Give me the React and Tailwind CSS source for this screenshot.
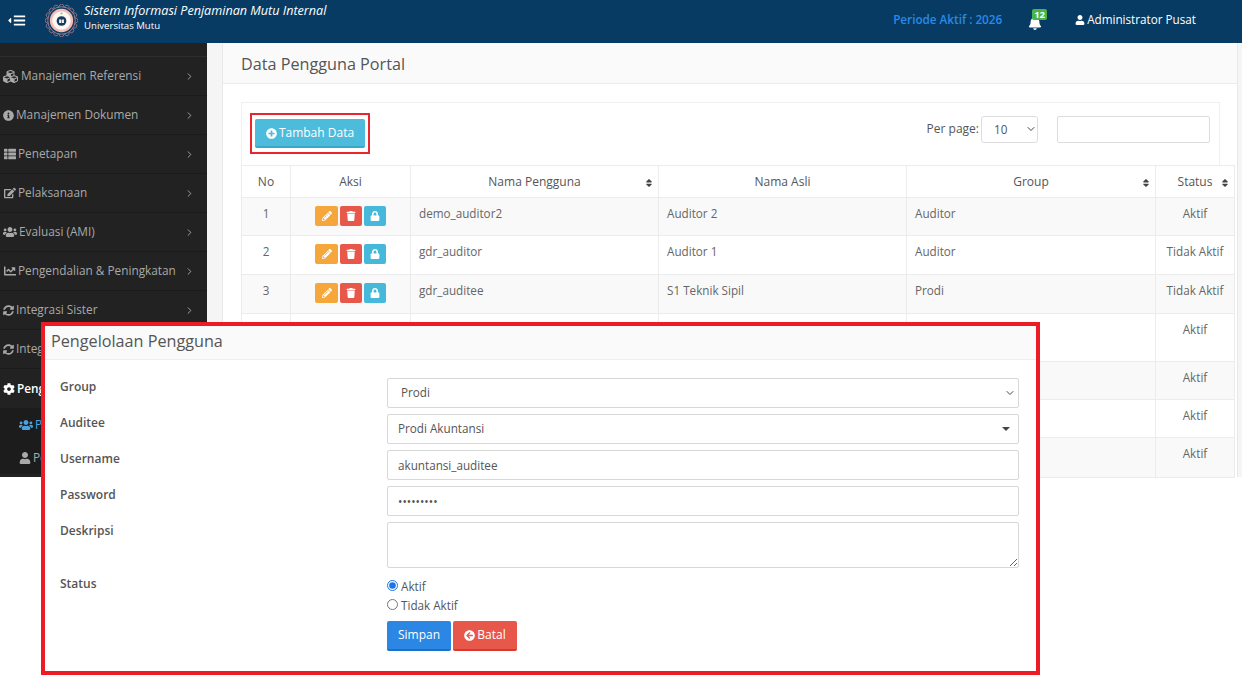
import React from 'react';
import { ChevronDown, ChevronRight } from 'lucide-react';
import {
  FaArrowCircleLeft, FaBars, FaBell, FaCaretLeft, FaChartLine, FaCog, FaCubes, FaEdit, FaInfoCircle,
  FaLock, FaPencilAlt, FaPlusCircle, FaSort, FaSyncAlt, FaThList, FaTrash, FaUser, FaUsers,
} from 'react-icons/fa';

const menu = [
  { label: 'Manajemen Referensi', icon: FaCubes, iconClass: 'ml-[3px] mr-[3px] h-[15px] w-[15px]' },
  { label: 'Manajemen Dokumen', icon: FaInfoCircle, iconClass: 'ml-[3px] mr-[2px] h-[11px] w-[11px]' },
  { label: 'Penetapan', icon: FaThList, iconClass: 'ml-[4px] mr-[2px] h-[12px] w-[12px]' },
  { label: 'Pelaksanaan', icon: FaEdit, iconClass: 'ml-[4px] mr-[2px] h-[12px] w-[12px]' },
  { label: 'Evaluasi (AMI)', icon: FaUsers, iconClass: 'ml-[3px] mr-[2px] h-[14px] w-[14px]' },
  { label: 'Pengendalian & Peningkatan', icon: FaChartLine, iconClass: 'ml-[4px] mr-[2px] h-[12px] w-[12px]' },
  { label: 'Integrasi Sister', icon: FaSyncAlt, iconClass: 'ml-[3px] mr-[2px] h-[11px] w-[11px]' },
  { label: 'Integrasi Feeder', icon: FaSyncAlt, iconClass: 'ml-[3px] mr-[2px] h-[11px] w-[11px]' },
];

const rows = [
  { no: 1, user: 'demo_auditor2', name: 'Auditor 2', group: 'Auditor', status: 'Aktif', h: 'h-[38px]' },
  { no: 2, user: 'gdr_auditor', name: 'Auditor 1', group: 'Auditor', status: 'Tidak Aktif', h: 'h-[39px]' },
  { no: 3, user: 'gdr_auditee', name: 'S1 Teknik Sipil', group: 'Prodi', status: 'Tidak Aktif', h: 'h-[39px]' },
  { no: 4, user: '', name: '', group: '', status: 'Aktif', h: 'h-[48px]' },
  { no: 5, user: '', name: '', group: '', status: 'Aktif', h: 'h-[38px]' },
  { no: 6, user: '', name: '', group: '', status: 'Aktif', h: 'h-[38px]' },
  { no: 7, user: '', name: '', group: '', status: 'Aktif', h: 'h-[40px]' },
];

function Logo() {
  const bumps = Array.from({ length: 16 }, (_, i) => (i * 360) / 16);
  return (
    <svg viewBox="0 0 34 34" className="h-[33px] w-[33px] shrink-0">
      {bumps.map((a) => (
        <circle key={a} cx="17" cy="2.6" r="2.4" fill="#0b3a60" stroke="#b58a9a" strokeWidth="0.7" transform={`rotate(${a} 17 17)`} />
      ))}
      <circle cx="17" cy="17" r="14.2" fill="#123c60" stroke="#b58a9a" strokeWidth="0.8" />
      <circle cx="17" cy="17" r="12" fill="#f0bdb8" />
      <circle cx="17" cy="17" r="9.6" fill="#fbf7f3" />
      <circle cx="17" cy="17.5" r="5" fill="#173a5e" />
      <path d="M14.5 16h2.2v3.6h-2.2zM17.3 16h2.2v3.6h-2.2z" fill="#e8eef2" />
      <circle cx="17" cy="9.8" r="1" fill="#d9a43c" />
    </svg>
  );
}

function Header() {
  return (
    <div className="flex h-[43px] shrink-0 items-center bg-[#073b63] pb-[3px] text-white">
      <div className="ml-[7px] flex w-[38px] items-center">
        <FaCaretLeft className="h-[9px] w-[5px]" />
        <FaBars className="ml-[1px] h-[13px] w-[13px]" />
      </div>
      <Logo />
      <div className="mb-[6px] ml-[6px] flex flex-col">
        <span className="text-[12.6px] leading-[18px] italic">Sistem Informasi Penjaminan Mutu Internal</span>
        <span className="text-[9.6px] leading-[12px] font-medium">Universitas Mutu</span>
      </div>
      <span className="ml-auto text-[11.7px] font-semibold text-[#2a8ae6]">Periode Aktif : 2026</span>
      <div className="relative ml-[26px] h-[20px] w-[18px]">
        <FaBell className="absolute top-[6px] left-0 h-[14px] w-[14px]" />
        <span className="absolute -top-[1px] left-[4px] rounded-[2px] bg-[#45b649] px-[2px] text-[9.5px] leading-[11px] font-bold">12</span>
      </div>
      <div className="mr-[46px] ml-[29px] flex items-center gap-[2px] text-[11.7px] font-medium">
        <FaUser className="h-[10px] w-[10px]" />
        <span>Administrator Pusat</span>
      </div>
    </div>
  );
}

function Sidebar() {
  return (
    <div className="flex w-[207px] shrink-0 flex-col bg-[#222222] pt-[13px] text-[11.8px] text-[#a9a9a9]">
      <div className="border-t border-[#2e2e2e]" />
      {menu.map((item) => (
        <div key={item.label} className="flex h-[39px] items-center border-b border-[#1b1b1b] pr-[12px]">
          <item.icon className={`shrink-0 ${item.iconClass}`} />
          <span className="whitespace-nowrap">{item.label}</span>
          <ChevronRight className="ml-auto h-[11px] w-[11px] shrink-0" />
        </div>
      ))}
      <div className="flex h-[39px] items-center gap-[2px] pl-[3px] font-semibold text-white">
        <FaCog className="h-[12px] w-[12px]" />
        <span>Pengaturan</span>
      </div>
      <div className="flex h-[33px] items-center gap-[2px] bg-[#1c1c1c] pl-[19px] text-[#4aa3e0]">
        <FaUsers className="h-[14px] w-[14px]" />
        <span>Pengguna Portal</span>
      </div>
      <div className="flex h-[33px] items-center gap-[2px] bg-[#1c1c1c] pl-[19px]">
        <FaUser className="h-[12px] w-[12px]" />
        <span>Pengguna Lain</span>
      </div>
    </div>
  );
}

function ActionButton({ icon: Icon, color, width }) {
  return (
    <span className={`flex h-[20px] items-center justify-center rounded-[2px] text-white ${color} ${width}`}>
      <Icon className="h-[10px] w-[10px]" />
    </span>
  );
}

function SortHead({ children, sortable, width }) {
  return (
    <th className={`relative border border-[#ececec] text-center text-[12px] font-medium text-[#555] ${width}`}>
      {children}
      {sortable && <FaSort className="absolute top-[12px] right-[5px] h-[10px] w-[8px] text-[#444]" />}
    </th>
  );
}

function DataTable() {
  return (
    <table className="w-[993px] table-fixed border-collapse text-[11.7px] text-[#666]">
      <thead>
        <tr className="h-[32px]">
          <SortHead width="w-[49px]">No</SortHead>
          <SortHead width="w-[120px]">Aksi</SortHead>
          <SortHead width="w-[248px]" sortable>Nama Pengguna</SortHead>
          <SortHead width="w-[248px]">Nama Asli</SortHead>
          <SortHead width="w-[249px]" sortable>Group</SortHead>
          <SortHead width="w-[79px]" sortable>Status</SortHead>
        </tr>
      </thead>
      <tbody>
        {rows.map((row) => (
          <tr key={row.no} className={`${row.h} ${row.no % 2 === 1 ? 'bg-[#f9f9f9]' : 'bg-white'}`}>
            <td className="border border-[#ececec] pt-[7px] text-center align-top">{row.no}</td>
            <td className="border border-[#ececec] pt-[8px] align-top">
              <div className="flex justify-center gap-[2px]">
                <ActionButton icon={FaPencilAlt} color="bg-[#f5a73b]" width="w-[23px]" />
                <ActionButton icon={FaTrash} color="bg-[#e7574a]" width="w-[22px]" />
                <ActionButton icon={FaLock} color="bg-[#46b8da]" width="w-[22px]" />
              </div>
            </td>
            <td className="border border-[#ececec] px-[8px] pt-[7px] align-top">{row.user}</td>
            <td className="border border-[#ececec] px-[8px] pt-[7px] align-top">{row.name}</td>
            <td className="border border-[#ececec] px-[8px] pt-[7px] align-top">{row.group}</td>
            <td className="border border-[#ececec] pt-[7px] text-center align-top">{row.status}</td>
          </tr>
        ))}
      </tbody>
    </table>
  );
}

function Content() {
  return (
    <div className="flex min-w-0 flex-1 bg-[#f5f5f5] pl-[15px]">
      <div className="flex w-[1016px] flex-col border-x border-[#e8e8e8] bg-white">
        <div className="flex h-[41px] shrink-0 items-center border-b border-[#ececec] bg-[#fafafa] pt-[2px] pl-[18px] text-[16.2px] text-[#555]">
          Data Pengguna Portal
        </div>
        <div className="ml-[18px] mt-[18px] flex-1">
          <div className="flex h-[63px] w-[979px] border-x border-t border-[#f0f0f0]">
            <div className="mt-[10px] ml-[8px] h-[41px] w-[120px] border-2 border-[#e8262c] px-[3px] pt-[4px]">
              <button className="flex h-[29px] w-full items-center justify-center gap-[2px] rounded-[2px] border-b-2 border-[#39a9ca] bg-[#4dbbdb] pt-[1px] text-[12px] text-white">
                <FaPlusCircle className="h-[11px] w-[11px]" />
                Tambah Data
              </button>
            </div>
            <div className="mt-[13px] ml-auto flex items-start">
              <span className="mt-[4px] mr-[2px] text-[12px] font-medium text-[#555]">Per page:</span>
              <div className="relative h-[27px] w-[57px]">
                <select defaultValue="10" className="h-full w-full appearance-none rounded-[3px] border border-[#ddd] bg-white pl-[12px] text-[11.7px] text-[#555]">
                  <option>10</option>
                </select>
                <ChevronDown className="pointer-events-none absolute top-[7px] right-[1px] h-[12px] w-[12px] text-[#444]" />
              </div>
              <input className="mr-[9px] ml-[19px] h-[27px] w-[153px] rounded-[2px] border border-[#ddd] bg-white" />
            </div>
          </div>
          <DataTable />
        </div>
      </div>
    </div>
  );
}

function FormRow({ label, className, children }) {
  return (
    <div className={`flex ${className}`}>
      <label className="h-[18px] w-[327px] shrink-0 text-[12px] leading-[18px] font-semibold text-[#555]">{label}</label>
      <div className="w-[632px]">{children}</div>
    </div>
  );
}

function UserForm() {
  const field = 'h-[30px] w-full rounded-[2px] border border-[#d8d8d8] bg-white text-[11.7px] text-[#555]';
  return (
    <div className="absolute top-[322px] left-[41px] h-[353px] w-[999px] border-[4px] border-[#ed1c24] bg-white">
      <div className="flex h-[34px] items-center border-b border-[#eeeeee] bg-[#fafafa] pb-[2px] pl-[6px] text-[16.2px] text-[#555]">
        Pengelolaan Pengguna
      </div>
      <div className="flex flex-col pt-[18px] pl-[15px]">
        <FormRow label="Group" className="mb-[6px]">
          <div className="relative">
            <select defaultValue="Prodi" className={`${field} appearance-none pl-[13px]`}>
              <option>Prodi</option>
            </select>
            <ChevronDown className="pointer-events-none absolute top-[9px] right-[3px] h-[12px] w-[12px] text-[#444]" />
          </div>
        </FormRow>
        <FormRow label="Auditee" className="mb-[6px]">
          <div className={`${field} flex items-center pr-[8px] pl-[10px]`}>
            Prodi Akuntansi
            <span className="ml-auto h-0 w-0 border-x-[4px] border-t-[4px] border-x-transparent border-t-[#444]" />
          </div>
        </FormRow>
        <FormRow label="Username" className="mb-[6px]">
          <input defaultValue="akuntansi_auditee" className={`${field} px-[10px]`} />
        </FormRow>
        <FormRow label="Password" className="mb-[6px]">
          <input type="password" defaultValue="auditee12" className={`${field} px-[10px]`} />
        </FormRow>
        <FormRow label="Deskripsi" className="mb-[7px]">
          <textarea className="block h-[46px] w-full rounded-[2px] border border-[#d8d8d8] bg-white" />
        </FormRow>
        <FormRow label="Status">
          <div className="flex flex-col pt-[2px] text-[11.7px] text-[#555]">
            <label className="flex h-[19px] items-center gap-[3px]">
              <input type="radio" name="status" defaultChecked className="-mt-[2px] h-[11px] w-[11px] accent-[#1a73e8]" />
              Aktif
            </label>
            <label className="flex h-[19px] items-center gap-[3px]">
              <input type="radio" name="status" className="-mt-[2px] h-[11px] w-[11px]" />
              Tidak Aktif
            </label>
            <div className="mt-[6px] flex gap-[2px] text-[12px] text-white">
              <button className="h-[30px] w-[64px] rounded-[2px] border-b-2 border-[#1a6fc9] bg-[#2b87e3]">Simpan</button>
              <button className="flex h-[30px] w-[64px] items-center justify-center gap-[2px] rounded-[2px] border-b-2 border-[#d9392c] bg-[#e7574a]">
                <FaArrowCircleLeft className="h-[11px] w-[11px]" />
                Batal
              </button>
            </div>
          </div>
        </FormRow>
      </div>
    </div>
  );
}

export default function App() {
  return (
    <div className="relative h-[675px] w-[1242px] overflow-hidden bg-white font-['Open_Sans',sans-serif]">
      <div className="flex h-[477px] flex-col">
        <Header />
        <div className="flex min-h-0 flex-1">
          <Sidebar />
          <Content />
        </div>
      </div>
      <UserForm />
    </div>
  );
}
